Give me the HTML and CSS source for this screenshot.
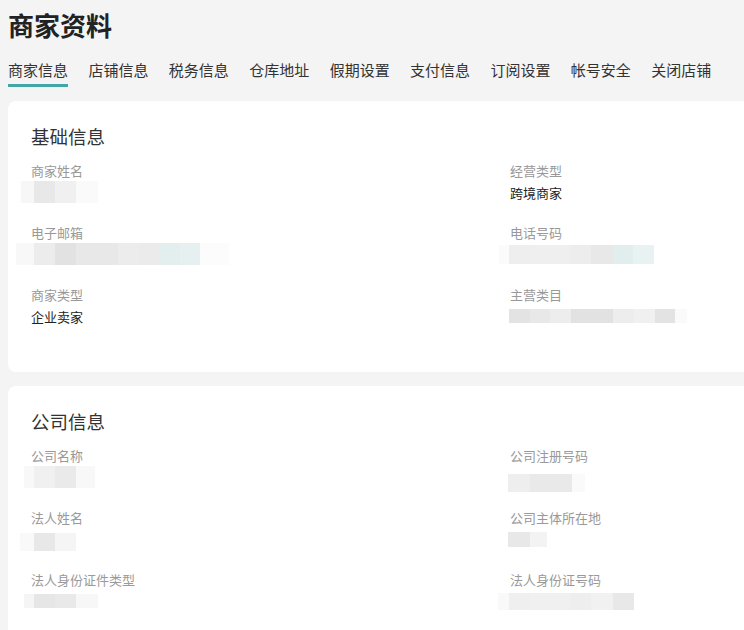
FILE: index.html
```html
<!DOCTYPE html>
<html lang="zh-CN">
<head>
<meta charset="utf-8">
<title>商家资料</title>
<link rel="stylesheet" href="styles.css">
</head>
<body>
<div class="page">
  <h1 class="title">商家资料</h1>
  <nav class="tabs">
    <a class="tab active">商家信息</a>
    <a class="tab">店铺信息</a>
    <a class="tab">税务信息</a>
    <a class="tab">仓库地址</a>
    <a class="tab">假期设置</a>
    <a class="tab">支付信息</a>
    <a class="tab">订阅设置</a>
    <a class="tab">帐号安全</a>
    <a class="tab">关闭店铺</a>
  </nav>

  <section class="card">
    <h2 class="card-title">基础信息</h2>
    <div class="fields">
      <div class="field">
        <div class="label">商家姓名</div>
        <div class="value">
          <div class="mosaic" style="margin-left:-10px;height:22px">
            <i style="width:13px;background:#f7f7f7"></i><i style="width:21px;background:#e8e8e8"></i><i style="width:21px;background:#f0f0f0"></i><i style="width:22px;background:#fafafa"></i>
          </div>
        </div>
      </div>
      <div class="field">
        <div class="label">经营类型</div>
        <div class="value">跨境商家</div>
      </div>
      <div class="field">
        <div class="label">电子邮箱</div>
        <div class="value">
          <div class="mosaic" style="margin-left:-15px;height:22px">
            <i style="width:18px;background:#f8f8f8"></i><i style="width:21px;background:#ececec"></i><i style="width:21px;background:#e2e2e2"></i><i style="width:42px;background:#e8e8e8"></i><i style="width:20px;background:#ececec"></i><i style="width:21px;background:#ebebeb"></i><i style="width:21px;background:#e3eeee"></i><i style="width:20px;background:#e6f0f0"></i><i style="width:29px;background:#fcfcfc"></i>
          </div>
        </div>
      </div>
      <div class="field">
        <div class="label">电话号码</div>
        <div class="value">
          <div class="mosaic" style="margin-left:-11px;height:19px">
            <i style="width:10px;background:#fbfbfb"></i><i style="width:21px;background:#eeeeee"></i><i style="width:40px;background:#efefef"></i><i style="width:21px;background:#ededed"></i><i style="width:22px;background:#e8e8e8"></i><i style="width:20px;background:#e2eded"></i><i style="width:21px;background:#e8f2f2"></i>
          </div>
        </div>
      </div>
      <div class="field">
        <div class="label">商家类型</div>
        <div class="value">企业卖家</div>
      </div>
      <div class="field">
        <div class="label">主营类目</div>
        <div class="value">
          <div class="mosaic" style="margin-left:-1px;height:14px">
            <i style="width:21px;background:#e3e3e3"></i><i style="width:20px;background:#e8e8e8"></i><i style="width:21px;background:#ededed"></i><i style="width:42px;background:#e2e2e2"></i><i style="width:21px;background:#ededed"></i><i style="width:21px;background:#f0f0f0"></i><i style="width:20px;background:#e3e3e3"></i><i style="width:12px;background:#fafafa"></i>
          </div>
        </div>
      </div>
    </div>
  </section>

  <section class="card">
    <h2 class="card-title">公司信息</h2>
    <div class="fields">
      <div class="field">
        <div class="label">公司名称</div>
        <div class="value">
          <div class="mosaic" style="margin-left:-7px;height:22px">
            <i style="width:10px;background:#f8f8f8"></i><i style="width:21px;background:#f0f0f0"></i><i style="width:21px;background:#eaeaea"></i><i style="width:19px;background:#f8f8f8"></i>
          </div>
        </div>
      </div>
      <div class="field">
        <div class="label">公司注册号码</div>
        <div class="value">
          <div class="mosaic shift-down" style="margin-left:-2px;height:18px">
            <i style="width:22px;background:#eeeeee"></i><i style="width:42px;background:#e9e9e9"></i><i style="width:13px;background:#fafafa"></i>
          </div>
        </div>
      </div>
      <div class="field">
        <div class="label">法人姓名</div>
        <div class="value">
          <div class="mosaic shift-down-sm" style="margin-left:-11px;height:18px">
            <i style="width:14px;background:#f9f9f9"></i><i style="width:21px;background:#e8e8e8"></i><i style="width:21px;background:#f5f5f5"></i>
          </div>
        </div>
      </div>
      <div class="field">
        <div class="label">公司主体所在地</div>
        <div class="value">
          <div class="mosaic" style="margin-left:-2px;height:15px">
            <i style="width:22px;background:#e8e8e8"></i><i style="width:17px;background:#f3f3f3"></i>
          </div>
        </div>
      </div>
      <div class="field">
        <div class="label">法人身份证件类型</div>
        <div class="value">
          <div class="mosaic" style="margin-left:-7px;height:14px">
            <i style="width:10px;background:#f5f5f5"></i><i style="width:21px;background:#e6e6e6"></i><i style="width:21px;background:#e9e9e9"></i><i style="width:22px;background:#f7f7f7"></i>
          </div>
        </div>
      </div>
      <div class="field">
        <div class="label">法人身份证号码</div>
        <div class="value">
          <div class="mosaic" style="margin-left:-12px;height:17px">
            <i style="width:11px;background:#f9f9f9"></i><i style="width:21px;background:#efefef"></i><i style="width:40px;background:#f0f0f0"></i><i style="width:21px;background:#eeeeee"></i><i style="width:22px;background:#f1f1f1"></i><i style="width:21px;background:#e8e8e8"></i>
          </div>
        </div>
      </div>
    </div>
  </section>
</div>
</body>
</html>
```

FILE: styles.css
```css
html, body {
  margin: 0;
  padding: 0;
  overflow: hidden;
  background: #f4f4f4;
}

body {
  font-family: "Noto Sans CJK SC", "Noto Sans", sans-serif;
  color: #333;
}

.page {
  padding: 10px 0 0 8px;
}

.title {
  margin: 0;
  font-size: 26px;
  line-height: 30px;
  font-weight: 700;
  color: #222;
}

.tabs {
  display: flex;
  gap: 20.4px;
  margin-top: 20px;
}

.tab {
  font-size: 15px;
  line-height: 20px;
  color: #333;
  padding-bottom: 4px;
  border-bottom: 3px solid transparent;
  cursor: pointer;
}

.tab.active {
  border-bottom-color: #45a6a8;
}

/* the cards continue past the right edge of the viewport */
.card {
  background: #fff;
  border-radius: 8px 0 0 8px;
  padding: 22px 0 45px 23px;
  box-sizing: border-box;
  margin-top: 14px;
}

.card-title {
  margin: 0 0 12px;
  font-size: 18.5px;
  line-height: 26px;
  font-weight: 400;
  color: #333;
}

.fields {
  display: grid;
  grid-template-columns: 479px 1fr;
  row-gap: 20px;
}

.label {
  font-size: 13px;
  line-height: 20px;
  color: #999;
}

.value {
  height: 22px;
  display: flex;
  align-items: center;
  font-size: 13px;
  color: #222;
}

.mosaic {
  display: flex;
}

.mosaic i {
  display: block;
  height: 100%;
}

.shift-down {
  margin-top: 12px;
}

.shift-down-sm {
  margin-top: 6px;
}
```
